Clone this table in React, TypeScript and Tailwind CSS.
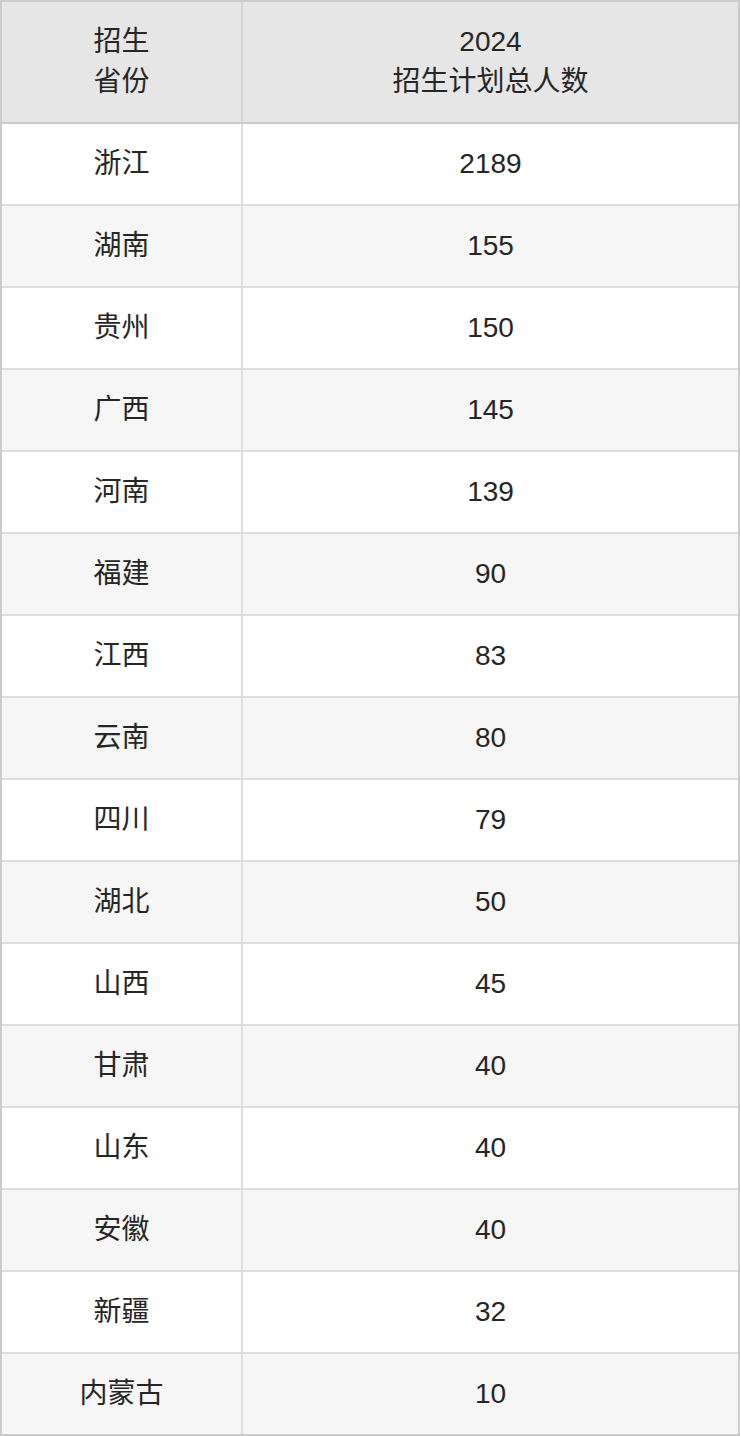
const ROWS: [string, number][] = [
  ["浙江", 2189],
  ["湖南", 155],
  ["贵州", 150],
  ["广西", 145],
  ["河南", 139],
  ["福建", 90],
  ["江西", 83],
  ["云南", 80],
  ["四川", 79],
  ["湖北", 50],
  ["山西", 45],
  ["甘肃", 40],
  ["山东", 40],
  ["安徽", 40],
  ["新疆", 32],
  ["内蒙古", 10],
];

export default function App() {
  return (
    <div
      className="w-[740px] bg-white text-[28px] leading-[40px] text-[#262626]"
      style={{ fontFamily: '"Liberation Sans", "Noto Sans CJK SC", sans-serif' }}
    >
      <div className="border-2 border-[#ccc]">
        {/* Header */}
        <div className="flex h-[122px] border-b-2 border-[#ccc] bg-[#e6e6e6]">
          <div className="flex w-[241px] flex-col items-center justify-center border-r-2 border-[#d4d4d4] text-center">
            <span>招生</span>
            <span>省份</span>
          </div>
          <div className="flex flex-1 flex-col items-center justify-center text-center">
            <span>2024</span>
            <span>招生计划总人数</span>
          </div>
        </div>

        {ROWS.map(([prov, n], i) => (
          <div
            key={prov}
            className={`flex ${i < ROWS.length - 1 ? "h-[82px] border-b-2 border-[#ddd]" : "h-[80px]"} ${
              i % 2 === 1 ? "bg-[#f6f6f6]" : "bg-white"
            }`}
          >
            <div className="flex w-[241px] items-center justify-center border-r-2 border-[#ddd]">{prov}</div>
            <div className="flex flex-1 items-center justify-center">{n}</div>
          </div>
        ))}
      </div>
    </div>
  );
}
